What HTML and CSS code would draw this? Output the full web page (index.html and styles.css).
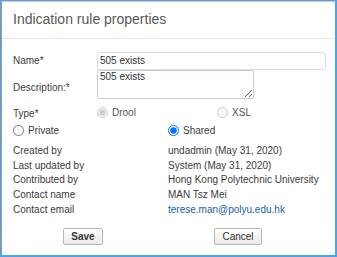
FILE: index.html
```html
<!DOCTYPE html>
<html lang="en">
<head>
    <meta charset="UTF-8">
    <title>Indication rule properties</title>
    <link rel="stylesheet" href="styles.css">
</head>
<body>
    <div class="dialog">
        <div class="dialog-header">Indication rule properties</div>
        <div class="dialog-body">
            <div class="row row-name">
                <label class="label">Name*</label>
                <input class="field" type="text" value="505 exists">
            </div>
            <div class="row row-desc">
                <label class="label">Description:*</label>
                <textarea class="area">505 exists</textarea>
            </div>
            <div class="row row-type">
                <label class="label">Type*</label>
                <div class="type-options">
                    <label class="opt disabled"><input type="radio" name="type" checked disabled> Drool</label>
                    <label class="opt disabled"><input type="radio" name="type" disabled> XSL</label>
                </div>
            </div>
            <div class="row row-share">
                <label class="opt share-private"><input type="radio" name="share"> Private</label>
                <label class="opt"><input type="radio" name="share" checked> Shared</label>
            </div>
            <div class="info">
                <div class="info-row"><span class="info-label">Created by</span><span>undadmin (May 31, 2020)</span></div>
                <div class="info-row"><span class="info-label">Last updated by</span><span>System (May 31, 2020)</span></div>
                <div class="info-row"><span class="info-label">Contributed by</span><span>Hong Kong Polytechnic University</span></div>
                <div class="info-row"><span class="info-label">Contact name</span><span>MAN Tsz Mei</span></div>
                <div class="info-row"><span class="info-label">Contact email</span><a href="#">terese.man@polyu.edu.hk</a></div>
            </div>
            <div class="actions">
                <button class="btn btn-save">Save</button>
                <button class="btn btn-cancel">Cancel</button>
            </div>
        </div>
    </div>
</body>
</html>
```

FILE: styles.css
```css
* {
    margin: 0;
    padding: 0;
    box-sizing: border-box;
    font-family: "Liberation Sans", Arial, sans-serif;
}

body {
    width: 337px;
    height: 257px;
    background: #4da3f0;
    padding: 1px 2px 2px 1px;
}

.dialog {
    width: 100%;
    height: 100%;
    background: #ffffff;
    border-left: 1px solid #9a9a9a;
    border-top: 1px solid #c8c8c8;
}

.dialog-header {
    height: 37px;
    padding: 9px 0 0 11px;
    font-size: 14px;
    color: #585858;
    border-bottom: 1px solid #e5e5e5;
}

.dialog-body {
    padding: 12px 8px 0 11px;
    font-size: 10px;
    color: #3c3c3c;
}

.row {
    display: flex;
    align-items: flex-start;
}

.label {
    width: 84px;
    flex: none;
}

.row-name {
    align-items: center;
    height: 19px;
}

.field {
    width: 229px;
    height: 18px;
    border: 1px solid #d9dde4;
    border-radius: 3px;
    padding: 0 2px;
    font-size: 10px;
    color: #333;
}

.row-desc .label {
    padding-top: 12px;
}

.area {
    width: 157px;
    height: 29px;
    border: 1px solid #c5cede;
    border-radius: 2px;
    padding: 0 2px;
    font-size: 10px;
    color: #333;
    resize: both;
}

.row-type {
    height: 17px;
    align-items: center;
    margin-top: 4px;
}

.row-type .label {
    padding-top: 3px;
}

.type-options {
    display: flex;
    width: 154px;
    justify-content: space-between;
    padding-top: 1px;
}

.opt {
    display: flex;
    align-items: center;
    gap: 4px;
    font-size: 10px;
    color: #3c3c3c;
}

.opt.disabled {
    color: #555;
}

.opt input {
    width: 11px;
    height: 11px;
    margin: 0;
}

.row-share {
    height: 17px;
    align-items: center;
    margin-top: 2px;
}

.share-private {
    width: 155px;
}

.info {
    margin-top: 4px;
}

.info-row {
    display: flex;
    height: 14.8px;
    align-items: center;
}

.info-label {
    width: 155px;
    flex: none;
}

.info a {
    color: #1a5ea8;
    text-decoration: none;
}

.actions {
    display: flex;
    margin-top: 11px;
    padding-left: 50px;
}

.btn {
    height: 17px;
    width: 40px;
    font-size: 10px;
    font-weight: bold;
    color: #333;
    background: linear-gradient(#ffffff, #e9e9e9);
    border: 1px solid #b8b8b8;
    border-radius: 2px;
}

.btn-cancel {
    width: 48px;
    margin-left: 111px;
    font-weight: normal;
}
```
